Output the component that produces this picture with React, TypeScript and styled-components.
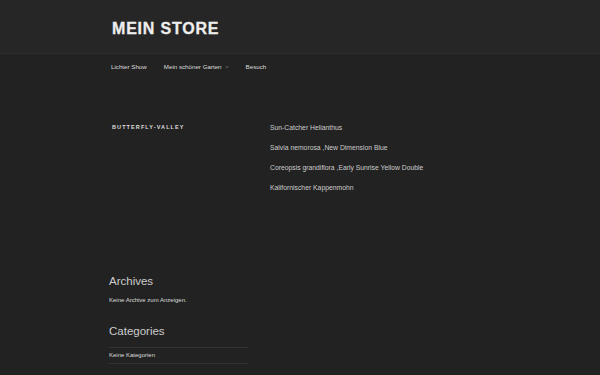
import React from "react";
import styled, { createGlobalStyle } from "styled-components";

const Global = createGlobalStyle`
  html, body { margin: 0; padding: 0; background: #222222; }
  body { font-family: "Liberation Sans", Arial, sans-serif; color: #dddddd; }
  * { box-sizing: border-box; }
`;

const Header = styled.header`
  height: 54px;
  background: #262626;
  border-bottom: 1px solid #2d2d2d;
  display: flex;
  align-items: center;
  padding: 4px 0 0 112px;
`;

const SiteTitle = styled.h1`
  margin: 0;
  font-size: 16px;
  font-weight: 700;
  letter-spacing: 0.05em;
  color: #eeeeee;
  text-transform: uppercase;
  -webkit-text-stroke: 0.3px #eeeeee;
`;

const Nav = styled.nav`
  display: flex;
  align-items: center;
  gap: 17px;
  padding: 0 0 0 111px;
  height: 25px;
`;

const NavItem = styled.span`
  font-size: 6.2px;
  color: #dddddd;
  display: inline-flex;
  align-items: center;
  gap: 3px;
`;

const Chevron = styled.svg`
  width: 4px;
  height: 4px;
`;

const Main = styled.main`
  display: flex;
  padding: 44px 0 0 112px;
  height: 196px;
`;

const Aside = styled.div`
  width: 158px;
`;

const WidgetLabel = styled.h2`
  margin: 0;
  font-size: 5.5px;
  line-height: 9px;
  font-weight: 700;
  letter-spacing: 0.2em;
  text-transform: uppercase;
  color: #dddddd;
`;

const List = styled.ul`
  list-style: none;
  margin: 0;
  padding: 0;
  display: flex;
  flex-direction: column;
  gap: 11px;
`;

const ListItem = styled.li`
  font-size: 6.8px;
  line-height: 9px;
  color: #cccccc;
`;

const Widgets = styled.section`
  padding-left: 109px;
  width: 248px;
`;

const Widget = styled.div`
  margin-bottom: 21px;
`;

const WidgetTitle = styled.h3`
  margin: 0 0 9px;
  font-size: 11.5px;
  line-height: 13px;
  font-weight: 300;
  color: #cccccc;
`;

const Text = styled.p`
  margin: 0;
  font-size: 6px;
  line-height: 7px;
  color: #dddddd;
`;

const Bordered = styled.ul`
  list-style: none;
  margin: 0;
  padding: 0;
  border-top: 1px solid #333333;
`;

const BorderedItem = styled.li`
  font-size: 6px;
  line-height: 7px;
  color: #dddddd;
  padding: 4px 0;
  border-bottom: 1px solid #303030;
`;

export default function App() {
  return (
    <>
      <Global />
      <Header>
        <SiteTitle>Mein Store</SiteTitle>
      </Header>
      <Nav>
        <NavItem>Lichter Show</NavItem>
        <NavItem>
          Mein schöner Garten
          <Chevron viewBox="0 0 10 10">
            <path d="M2 3.5 L5 6.5 L8 3.5" stroke="#bbbbbb" strokeWidth="1.4" fill="none" />
          </Chevron>
        </NavItem>
        <NavItem>Besuch</NavItem>
      </Nav>
      <Main>
        <Aside>
          <WidgetLabel>Butterfly-Valley</WidgetLabel>
        </Aside>
        <List>
          <ListItem>Sun-Catcher Helianthus</ListItem>
          <ListItem>Salvia nemorosa ,New Dimension Blue</ListItem>
          <ListItem>Coreopsis grandiflora ,Early Sunrise Yellow Double</ListItem>
          <ListItem>Kalifornischer Kappenmohn</ListItem>
        </List>
      </Main>
      <Widgets>
        <Widget>
          <WidgetTitle>Archives</WidgetTitle>
          <Text>Keine Archive zum Anzeigen.</Text>
        </Widget>
        <Widget>
          <WidgetTitle>Categories</WidgetTitle>
          <Bordered>
            <BorderedItem>Keine Kategorien</BorderedItem>
          </Bordered>
        </Widget>
      </Widgets>
    </>
  );
}
